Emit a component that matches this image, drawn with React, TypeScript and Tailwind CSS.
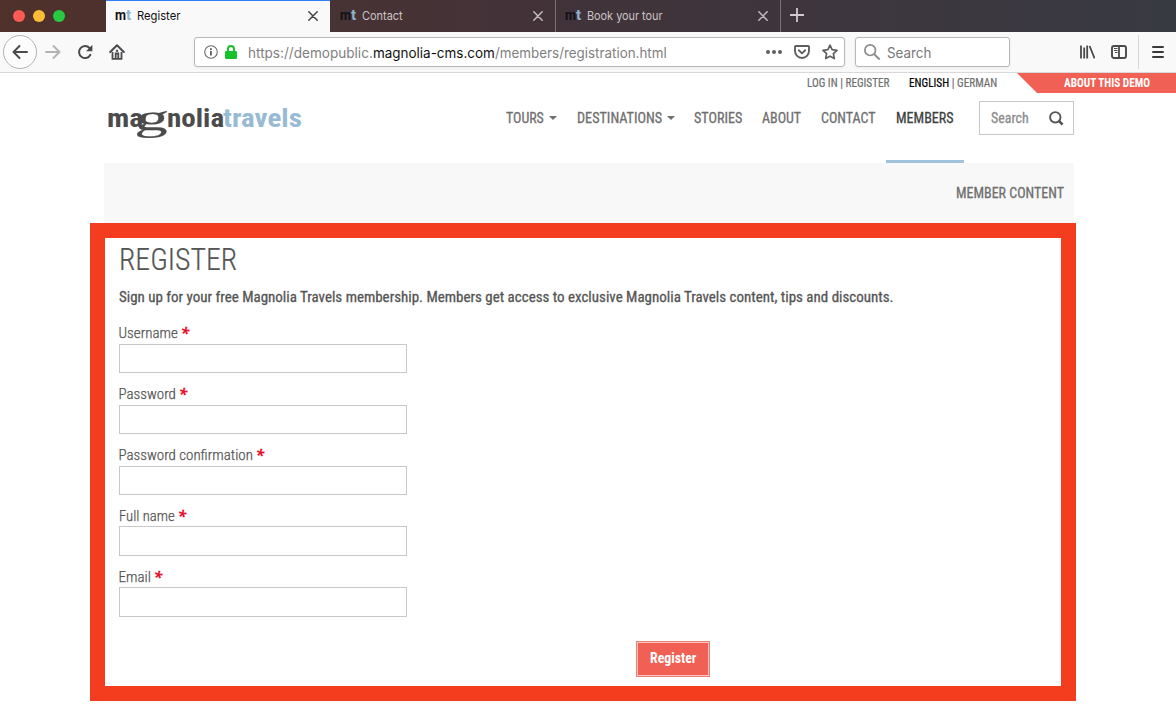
import { useLayoutEffect, useRef, useState } from "react";
import type { ReactNode } from "react";

/* Text squeezed or widened horizontally so it fills the width of its box. */
function Fit({ className = "", children }: { className?: string; children: ReactNode }) {
  const box = useRef<HTMLSpanElement>(null);
  const inner = useRef<HTMLSpanElement>(null);
  const [scale, setScale] = useState(1);
  useLayoutEffect(() => {
    if (box.current && inner.current && inner.current.offsetWidth > 0) {
      setScale(box.current.offsetWidth / inner.current.offsetWidth);
    }
  }, []);
  return (
    <span ref={box} className={`block shrink-0 ${className}`}>
      <span ref={inner} className="inline-block origin-left whitespace-nowrap align-top" style={{ transform: `scaleX(${scale})` }}>
        {children}
      </span>
    </span>
  );
}

function Favicon() {
  return (
    <span className="flex h-4 w-4 shrink-0 font-['Roboto',sans-serif] text-[15px] leading-[15px] font-bold">
      <Fit className="w-[11px] text-[#111]">m</Fit>
      <Fit className="w-[5px] text-[#8fb4cd]">t</Fit>
    </span>
  );
}

function Close({ className }: { className: string }) {
  return (
    <svg className={`mr-3 h-[10px] w-[10px] ${className}`} viewBox="0 0 10 10" fill="none" stroke="currentColor" strokeWidth="1.5" strokeLinecap="round">
      <path d="M.8.8l8.4 8.4M9.2.8L.8 9.2" />
    </svg>
  );
}

function Tabs() {
  return (
    <div className="flex h-8 bg-linear-to-r from-[#50312b] via-[#41333a] via-50% to-[#383a42] font-['Inter',sans-serif] text-[12px] leading-4">
      <div className="flex w-[106px] items-center gap-2 pl-[13px]">
        <span className="h-3 w-3 rounded-full bg-[#fc5b57]" />
        <span className="h-3 w-3 rounded-full bg-[#fdbc38]" />
        <span className="h-3 w-3 rounded-full bg-[#27ca40]" />
      </div>
      <div className="flex w-[224px] items-center border-t border-[#2f80f7] bg-[#f9f9fa] pb-px pl-[9px] text-[#111]">
        <Favicon />
        <Fit className="ml-[6px] w-[43px]">Register</Fit>
        <span className="grow" />
        <Close className="text-[#454545]" />
      </div>
      <div className="flex w-[226px] items-center border-r border-[#7a7178] pl-[10px] text-[#cbc5c6]">
        <Favicon />
        <Fit className="ml-[6px] w-[41px]">Contact</Fit>
        <span className="grow" />
        <Close className="text-[#c3bcbd]" />
      </div>
      <div className="flex w-[225px] items-center border-r border-[#7a7178] pl-[9px] text-[#cbc5c6]">
        <Favicon />
        <Fit className="ml-[6px] w-[76px]">Book your tour</Fit>
        <span className="grow" />
        <Close className="text-[#c3bcbd]" />
      </div>
      <svg className="mt-2 ml-[9px] h-[14px] w-[14px]" viewBox="0 0 14 14" stroke="#cfcbce" strokeWidth="1.8">
        <path d="M7 0v14M0 7h14" />
      </svg>
    </div>
  );
}

function Toolbar() {
  return (
    <div className="flex h-[41px] items-center border-b border-[#d9d9da] bg-[#f9f9fa] font-['Inter',sans-serif]">
      <div className="ml-[3px] flex h-[34px] w-[34px] items-center justify-center rounded-full border border-[#b4b4b4] bg-[#fcfcfc]">
        <svg className="h-4 w-4" viewBox="0 0 16 16" fill="none" stroke="#4a4a4c" strokeWidth="2" strokeLinecap="round" strokeLinejoin="round">
          <path d="M15 8H1.5M7.5 2l-6 6 6 6" />
        </svg>
      </div>
      <svg className="ml-2 h-4 w-4" viewBox="0 0 16 16" fill="none" stroke="#b3b3b5" strokeWidth="2" strokeLinecap="round" strokeLinejoin="round">
        <path d="M1 8h13.5M8.5 2l6 6-6 6" />
      </svg>
      <svg className="ml-4 h-4 w-4" viewBox="0 0 16 16" fill="none" stroke="#4a4a4c" strokeWidth="2">
        <path d="M13.4 10.8A6 6 0 1 1 12.5 4" strokeLinecap="round" />
        <path d="M15.4.8v6.4H9z" fill="#4a4a4c" stroke="none" />
      </svg>
      <svg className="ml-4 h-4 w-4" viewBox="0 0 16 16">
        <path d="M1.2 8L8 1.3 14.8 8" fill="none" stroke="#4a4a4c" strokeWidth="2" strokeLinecap="round" strokeLinejoin="round" />
        <path d="M3.5 8v6.8h9V8M6.7 15V9.5h2.6V15" fill="none" stroke="#4a4a4c" strokeWidth="1.8" />
        <path d="M6.9 5.8h2.2v2H6.9z" fill="#4a4a4c" />
      </svg>
      <div className="ml-[69px] flex h-[30px] w-[651px] items-center rounded-[3px] border border-[#b8b8b9] bg-white pr-[6px] pl-[9px] shadow-[0_1px_3px_rgba(0,0,0,0.06)]">
        <svg className="h-[14px] w-[14px]" viewBox="0 0 14 14">
          <circle cx="7" cy="7" r="6.3" fill="none" stroke="#6a6a6b" strokeWidth="1.1" />
          <path d="M6 6h1.8v4.5H6zM6 3.2h1.8v1.7H6z" fill="#5a5a5b" />
        </svg>
        <svg className="ml-[7px] h-[14px] w-3" viewBox="0 0 12 14">
          <path d="M3 7V4a3 3 0 0 1 6 0v3" fill="none" stroke="#16c12c" strokeWidth="2" />
          <rect y="6" width="12" height="8" rx="1.3" fill="#16c12c" />
        </svg>
        <div className="ml-[10.5px] flex pt-0.5 text-[14px] leading-5 text-[#7f7f80]">
          <Fit className="w-[125px]">https://demopublic.</Fit>
          <Fit className="w-[122px] text-[#111]">magnolia-cms.com</Fit>
          <Fit className="w-[172px]">/members/registration.html</Fit>
        </div>
        <span className="grow" />
        <svg className="h-4 w-4" viewBox="0 0 16 16" fill="#5f5f61">
          <circle cx="2" cy="8" r="2" /><circle cx="8" cy="8" r="2" /><circle cx="14" cy="8" r="2" />
        </svg>
        <svg className="ml-3 h-4 w-4" viewBox="0 0 16 16" fill="none" stroke="#5f5f61" strokeWidth="1.9" strokeLinecap="round" strokeLinejoin="round">
          <path d="M1 2.8Q1 2 1.8 2h12.4q.8 0 .8.8V7a7 7 0 0 1-14 0z" />
          <path d="M4.8 6.3L8 9.4l3.2-3.1" />
        </svg>
        <svg className="ml-3 h-4 w-4" viewBox="0 0 16 16" fill="none" stroke="#5f5f61" strokeWidth="1.7" strokeLinejoin="round">
          <path d="M8 1.2l2.1 4.5 4.9.6-3.6 3.4.9 4.9L8 12.2l-4.3 2.4.9-4.9L1 6.3l4.9-.6z" />
        </svg>
      </div>
      <div className="ml-[10px] flex h-[30px] w-[155px] items-center rounded-[3px] border border-[#b8b8b9] bg-white pl-2 shadow-[0_1px_3px_rgba(0,0,0,0.06)]">
        <svg className="h-4 w-4" viewBox="0 0 16 16" fill="none" stroke="#8b8b8c" strokeWidth="1.7">
          <circle cx="6.2" cy="6.2" r="5.3" />
          <path d="M10 10l5.7 5.5" strokeWidth="2" />
        </svg>
        <Fit className="ml-[7px] w-[44px] pt-0.5 text-[14px] leading-5 text-[#777778]">Search</Fit>
      </div>
      <svg className="ml-[69px] h-4 w-4" viewBox="0 0 16 16" stroke="#4a4a4c" strokeWidth="1.8">
        <path d="M2 1.5v13M5.2 3.5v11M8.2 1.5v13M10.6 2l5 12.4" />
      </svg>
      <svg className="ml-4 h-4 w-4" viewBox="0 0 16 16" fill="none" stroke="#4a4a4c">
        <rect x="1" y="2" width="14" height="12" rx="2" strokeWidth="1.9" />
        <path d="M8 2v12" strokeWidth="1.8" />
        <path d="M3 4.5h3.5M3 6.5h3.5M4 8.5h2.5" />
      </svg>
      <span className="ml-[11px] h-[34px] w-px bg-[#d6d6d7]" />
      <svg className="ml-[13px] h-3 w-3" viewBox="0 0 12 12" stroke="#39393b" strokeWidth="2" strokeLinecap="round">
        <path d="M1 1h10M1 6h10M1 11h10" />
      </svg>
    </div>
  );
}

function Logo() {
  return (
    <div className="mt-[10px] ml-[3px] flex h-8 w-[195px] font-['Roboto',sans-serif] text-[25px] leading-8 font-bold text-[#4b4b4c]">
      <Fit className="w-[36px]">ma</Fit>
      <Fit className="-mt-px -ml-[7px] w-[34px] -skew-x-6 font-['Liberation_Serif',serif] text-[37px] leading-8 font-normal [-webkit-text-stroke:0.2px_#4b4b4c]">g</Fit>
      <Fit className="-ml-[3px] w-[57px]">nolia</Fit>
      <Fit className="-ml-px w-[79px] text-[#98bbd3]">travels</Fit>
    </div>
  );
}

function Caret() {
  return (
    <svg className="ml-[5px] h-1 w-2" viewBox="0 0 8 4" fill="#6f6f6f">
      <path d="M0 0h8L4 4z" />
    </svg>
  );
}

function Field({ label, name, className, gap }: { label: string; name: string; className: string; gap: string }) {
  return (
    <div className={gap}>
      <label htmlFor={name} className="-ml-[0.5px] flex h-5 text-[15px] leading-5 font-light">
        <Fit className={`[-webkit-text-stroke:0.25px_#555] ${className}`}>{label}</Fit>
        <span className="ml-[3px] font-['Open_Sans',sans-serif] text-[16px] leading-[20px] font-bold text-[#e8112d] italic [font-stretch:100%]">*</span>
      </label>
      <input id={name} className="mt-[0.6px] block h-full max-h-[29.4px] min-h-[29.4px] w-[288px] border border-[#c8c8c8] bg-white px-2 outline-none" />
    </div>
  );
}

function Header() {
  return (
    <header>
      <div className="flex h-5 justify-end text-[12px] leading-5 text-[#6f6f6f]">
        <Fit className="w-[82px] [-webkit-text-stroke:0.2px]">LOG IN | REGISTER</Fit>
        <Fit className="ml-5 w-[88px] [-webkit-text-stroke:0.2px]"><span className="text-black">ENGLISH</span> | GERMAN</Fit>
        <div className="ml-5 flex w-[159px] bg-[#f06055] pl-[47px] font-bold text-white [clip-path:polygon(0_0,100%_0,100%_100%,20px_100%)]">
          <Fit className="w-[86px]">ABOUT THIS DEMO</Fit>
        </div>
      </div>
      <div className="ml-[104px] flex h-[70px] w-[970px] text-[15px] leading-5 text-[#6f6f6f]">
        <Logo />
        <nav className="ml-[204px] flex [-webkit-text-stroke:0.3px]">
          <div className="flex h-[50px] items-center"><Fit className="w-[38px]">TOURS</Fit><Caret /></div>
          <div className="ml-5 flex h-[50px] items-center"><Fit className="w-[85px]">DESTINATIONS</Fit><Caret /></div>
          <div className="ml-[19px] flex h-[50px] items-center"><Fit className="w-[48px]">STORIES</Fit></div>
          <div className="ml-5 flex h-[50px] items-center"><Fit className="w-[39px]">ABOUT</Fit></div>
          <div className="ml-5 flex h-[50px] items-center"><Fit className="w-[55px]">CONTACT</Fit></div>
          <div className="ml-[10px] flex h-[70px] w-[78px] justify-center border-b-3 border-[#9fc3dc] pt-[15px] text-[#3e3e3e]"><Fit className="w-[58px]">MEMBERS</Fit></div>
        </nav>
        <div className="mt-2 ml-auto flex h-[34px] w-[95px] items-center border border-[#c8c8c8] pl-[11px] text-[#8c8c8c]">
          <Fit className="w-[38px] [-webkit-text-stroke:0.3px]">Search</Fit>
          <svg className="ml-[20px] h-[15px] w-[15px]" viewBox="0 0 15 15" fill="none" stroke="#555" strokeWidth="1.9">
            <circle cx="6.3" cy="6.3" r="5.2" />
            <path d="M10 10l3.6 3.6" strokeWidth="2.6" />
          </svg>
        </div>
      </div>
      <div className="ml-[104px] flex h-[60px] w-[970px] items-center justify-end bg-[#f8f8f8] pr-[10.5px] text-[15px] leading-5 text-[#6f6f6f]">
        <Fit className="w-[108px] [-webkit-text-stroke:0.3px]">MEMBER CONTENT</Fit>
      </div>
    </header>
  );
}

export default function App() {
  return (
    <div className="h-[714px] w-[1176px] overflow-hidden bg-white">
      <Tabs />
      <Toolbar />
      <div className="font-['Roboto_Condensed','Roboto',sans-serif] [font-stretch:75%]">
        <Header />
        <main className="ml-[90px] h-[478px] w-[986px] border-[15px] border-[#f43d1e] pl-[14px] text-[#555]">
          <h1 className="-ml-[0.5px] h-[42px] text-[31px] leading-[44px] font-light"><Fit className="w-[118px] [-webkit-text-stroke:0.2px]">REGISTER</Fit></h1>
          <p className="mt-[7px] -ml-[0.5px] h-5 text-[15px] leading-5">
            <Fit className="w-[775px] [-webkit-text-stroke:0.3px]">Sign up for your free Magnolia Travels membership. Members get access to exclusive Magnolia Travels content, tips and discounts.</Fit>
          </p>
          <form>
            <Field label="Username" name="username" className="w-[59px]" gap="mt-[16.4px]" />
            <Field label="Password" name="password" className="w-[57px]" gap="mt-[10.8px]" />
            <Field label="Password confirmation" name="confirm" className="w-[134px]" gap="mt-[10.8px]" />
            <Field label="Full name" name="fullname" className="w-[56px]" gap="mt-[10.8px]" />
            <Field label="Email" name="email" className="w-[32px]" gap="mt-[10.8px]" />
            <button type="button" className="mt-6 ml-[517px] block h-9 w-[74px] border border-[#ee7f77] bg-[#f06055] text-[15px] leading-5 font-bold text-white">
              <span className="flex h-[34px] items-center justify-center border border-[#f8c4c0] pb-0.5"><Fit className="w-[46px]">Register</Fit></span>
            </button>
          </form>
        </main>
      </div>
    </div>
  );
}
